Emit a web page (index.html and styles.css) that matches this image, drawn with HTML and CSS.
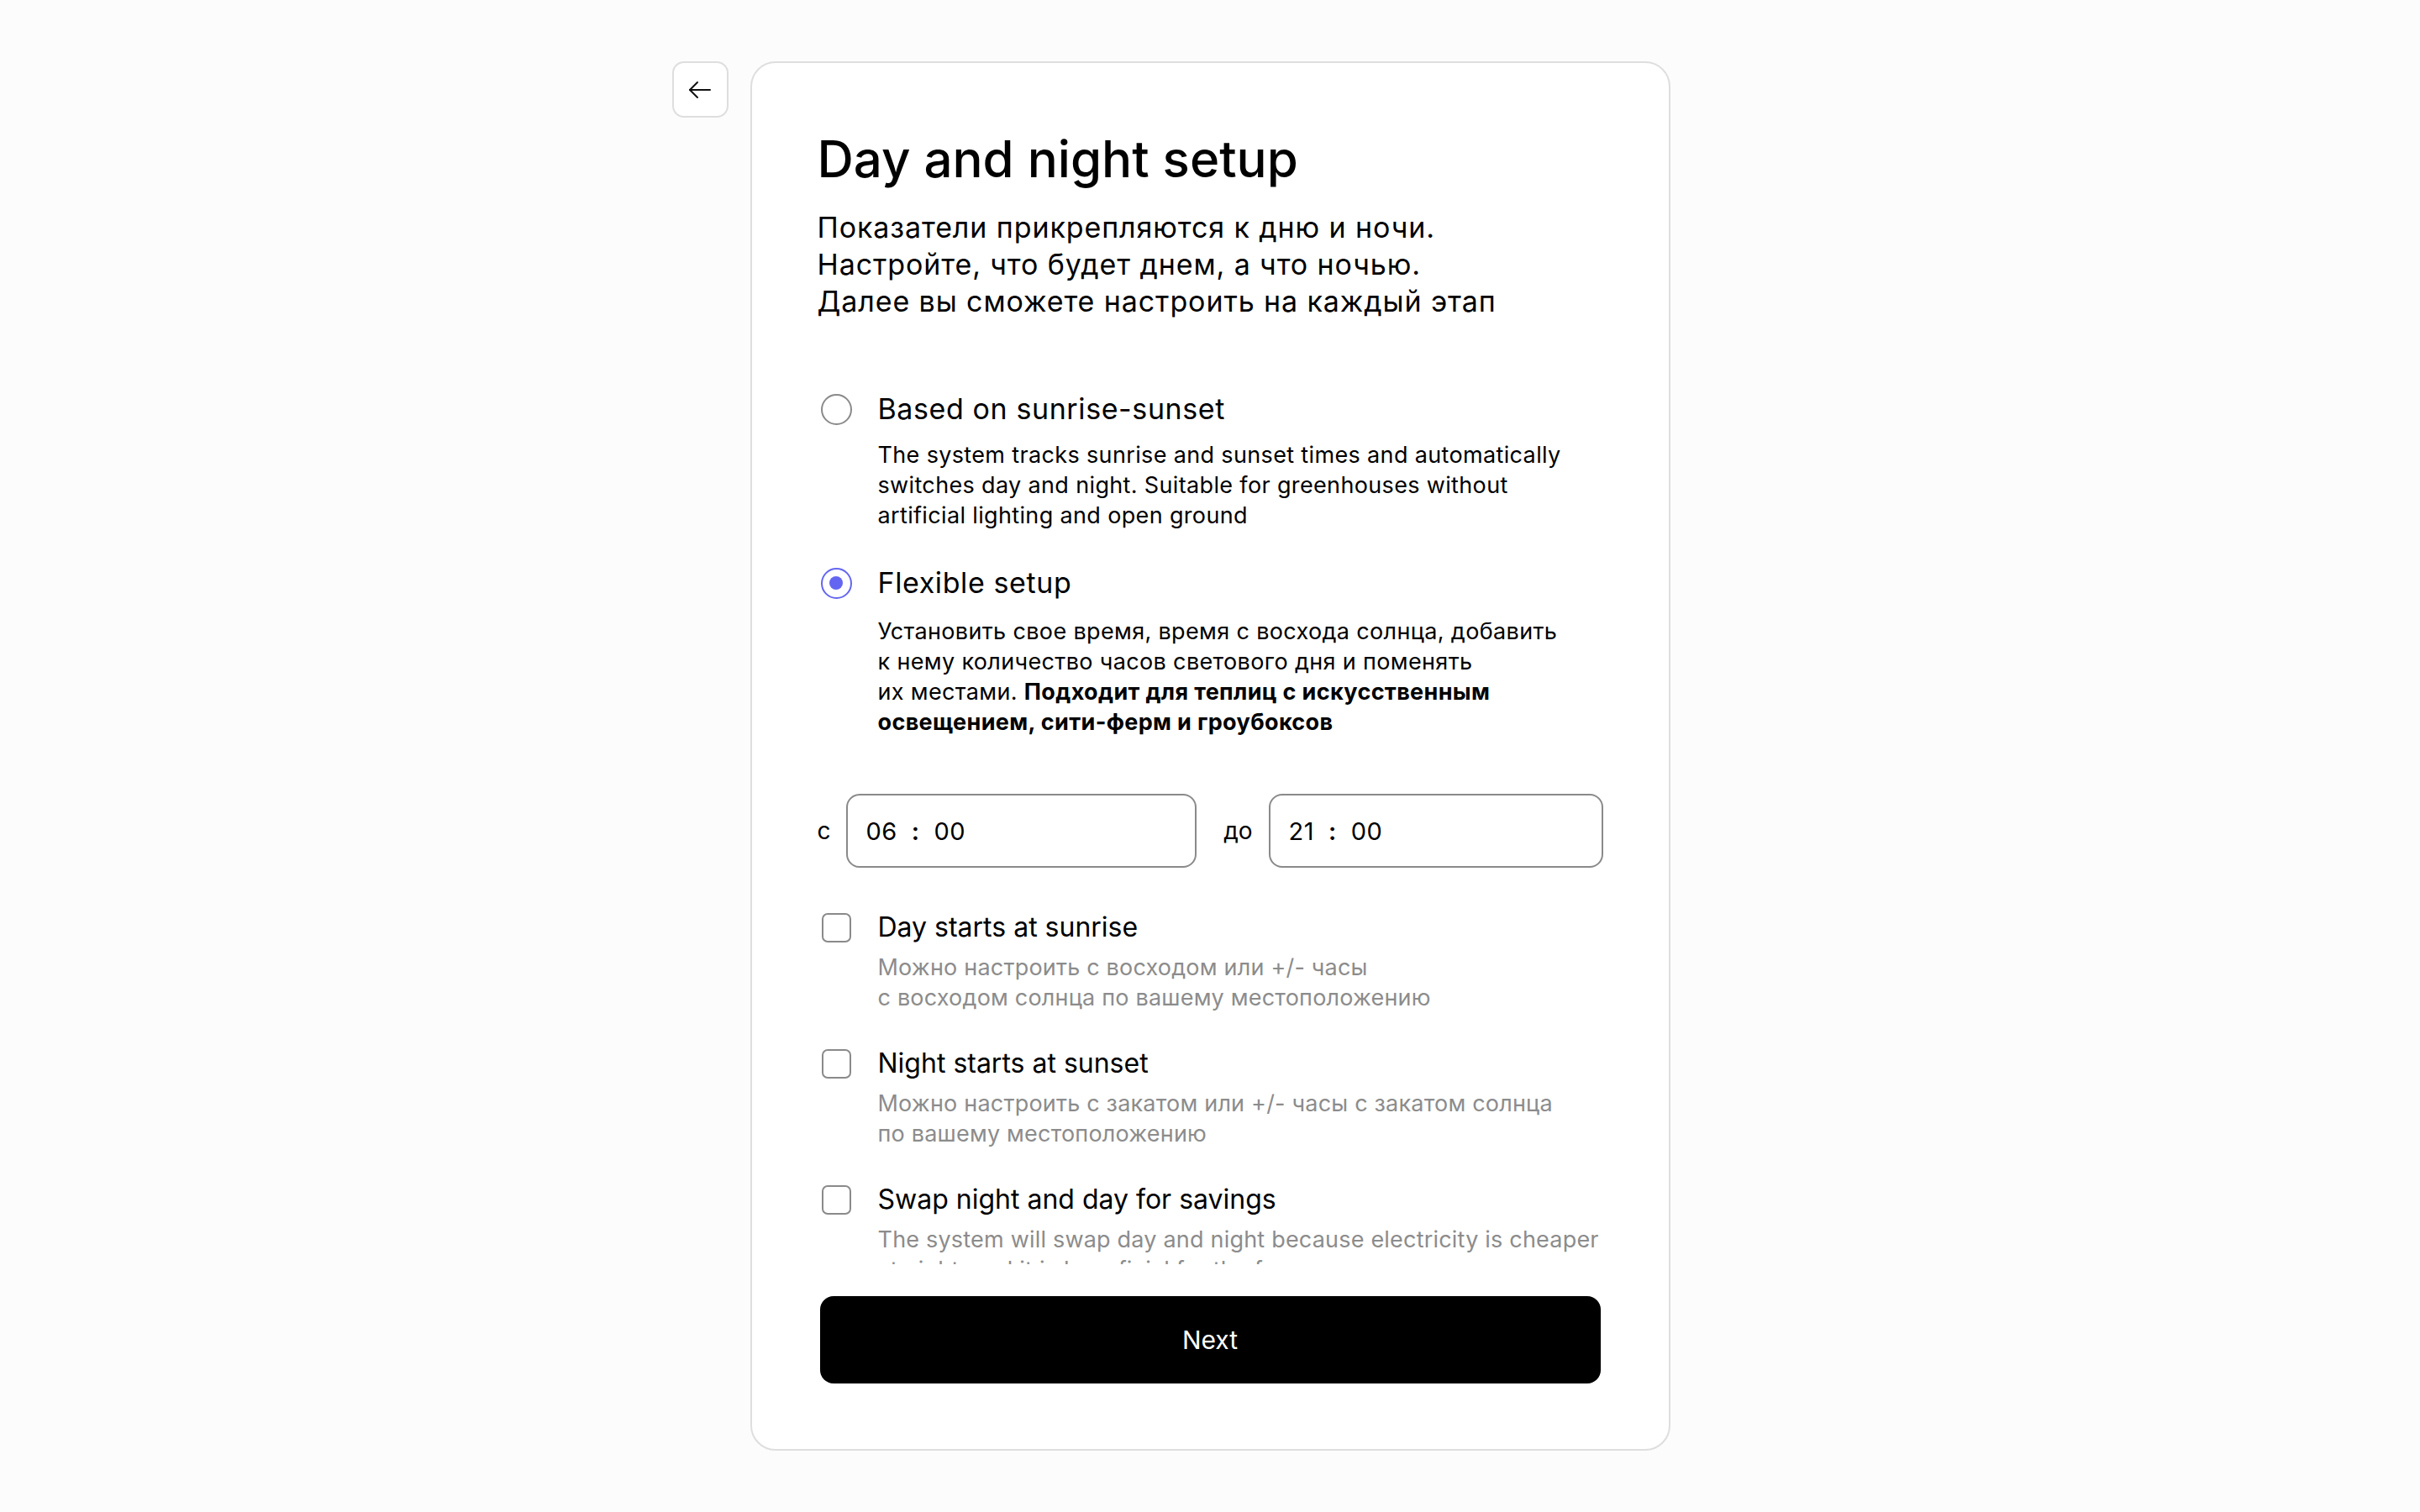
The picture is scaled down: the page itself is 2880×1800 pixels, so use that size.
FILE: index.html
```html
<!DOCTYPE html>
<html lang="ru">
<head>
<meta charset="utf-8">
<title>Day and night setup</title>
<link rel="stylesheet" href="styles.css">
</head>
<body>
<div class="page">
  <div class="side">
    <button class="back" type="button" aria-label="Back">
      <svg width="28" height="22" viewBox="0 0 28 22" fill="none" stroke="#111" stroke-width="2" stroke-linecap="round" stroke-linejoin="round">
        <path d="M26 11 H2"/>
        <path d="M11 2 L2 11 L11 20"/>
      </svg>
    </button>
  </div>
  <main class="card">
    <header class="head">
      <h1 class="title">Day and night setup</h1>
      <p class="subtitle">Показатели прикрепляются к дню и ночи.<br>Настройте, что будет днем, а что ночью.<br>Далее вы сможете настроить на каждый этап</p>
    </header>
    <div class="scroll">
      <div class="option option-first">
        <div class="opt-row">
          <span class="radio"></span>
          <span class="opt-title">Based on sunrise-sunset</span>
        </div>
        <p class="opt-desc">The system tracks sunrise and sunset times and automatically<br>switches day and night. Suitable for greenhouses without<br>artificial lighting and open ground</p>
      </div>
      <div class="option option-second">
        <div class="opt-row">
          <span class="radio radio-on"></span>
          <span class="opt-title">Flexible setup</span>
        </div>
        <p class="opt-desc opt-desc-2">Установить свое время, время с восхода солнца, добавить<br>к нему количество часов светового дня и поменять<br>их местами. <b>Подходит для теплиц с искусственным<br>освещением, сити-ферм и гроубоксов</b></p>
      </div>
      <div class="times">
        <span class="t-label">с</span>
        <div class="t-field t-field-1"><span>06</span><span class="colon">:</span><span>00</span></div>
        <span class="t-label t-label-2">до</span>
        <div class="t-field t-field-2"><span>21</span><span class="colon">:</span><span>00</span></div>
      </div>
      <div class="check check-first">
        <div class="chk-row">
          <span class="box"></span>
          <span class="chk-title">Day starts at sunrise</span>
        </div>
        <p class="chk-desc">Можно настроить с восходом или +/- часы<br>с восходом солнца по вашему местоположению</p>
      </div>
      <div class="check">
        <div class="chk-row">
          <span class="box"></span>
          <span class="chk-title">Night starts at sunset</span>
        </div>
        <p class="chk-desc">Можно настроить с закатом или +/- часы с закатом солнца<br>по вашему местоположению</p>
      </div>
      <div class="check">
        <div class="chk-row">
          <span class="box"></span>
          <span class="chk-title">Swap night and day for savings</span>
        </div>
        <p class="chk-desc">The system will swap day and night because electricity is cheaper<br>at night, and it is beneficial for the farm economy</p>
      </div>
    </div>
    <button class="next" type="button">Next</button>
  </main>
  <div class="side"></div>
</div>
</body>
</html>
```
FILE: styles.css
```css
* { box-sizing: border-box; }
html, body { margin: 0; padding: 0; }
body {
  background: #fcfcfc;
  font-family: Inter, "Noto Sans", "Liberation Sans", sans-serif;
  color: #000;
}
.page {
  display: grid;
  grid-template-columns: 1fr auto 1fr;
  padding-top: 73px;
}
.side { display: flex; justify-content: flex-end; align-items: flex-start; }
.back {
  width: 67px;
  height: 67px;
  margin-right: 26px;
  border: 2px solid #dedede;
  border-radius: 14px;
  background: #fff;
  display: flex;
  align-items: center;
  justify-content: center;
  padding: 0;
}
.card {
  width: 1095px;
  height: 1654px;
  background: #fff;
  border: 2px solid #dedede;
  border-radius: 30px;
  padding: 78px;
  display: flex;
  flex-direction: column;
}
.title {
  margin: 0;
  font-size: 60px;
  line-height: 72px;
  font-weight: 500;
  letter-spacing: 0;
}
.subtitle {
  margin: 24px 0 0;
  font-size: 34px;
  line-height: 44px;
  font-weight: 400;
  letter-spacing: 0.9px;
}
.scroll {
  flex: 1;
  min-height: 0;
  overflow: hidden;
}
.option-first { margin-top: 84px; }
.option-second { margin-top: 40px; }
.opt-row, .chk-row {
  display: flex;
  align-items: center;
}
.radio {
  width: 37px;
  height: 37px;
  margin-left: 4px;
  margin-right: 31px;
  border: 2px solid #8a8a8a;
  border-radius: 50%;
  flex: none;
  display: flex;
  align-items: center;
  justify-content: center;
}
.radio-on { border-color: #6466f1; }
.radio-on::after {
  content: "";
  width: 16px;
  height: 16px;
  border-radius: 50%;
  background: #6466f1;
}
.opt-title {
  font-size: 34px;
  line-height: 44px;
  letter-spacing: 0.6px;
}
.opt-desc {
  margin: 15px 0 0 72px;
  font-size: 27px;
  line-height: 36px;
  letter-spacing: 0.35px;
  white-space: nowrap;
}
.opt-desc-2 { margin-top: 18px; }
.opt-desc b { font-weight: 700; }
.times {
  margin-top: 67px;
  display: flex;
  align-items: center;
}
.t-label {
  font-size: 28px;
  line-height: 36px;
  margin-right: 18px;
}
.t-label-2 { margin-left: 32px; margin-right: 19px; }
.t-field {
  height: 88px;
  border: 2px solid #8a8a8a;
  border-radius: 16px;
  display: flex;
  align-items: center;
  padding-left: 22px;
  font-size: 29px;
  letter-spacing: 0.5px;
  gap: 17px;
}
.t-field-1 { flex: 1; }
.t-field-2 { width: 398px; }
.colon { font-weight: 600; }
.check { margin-top: 40px; }
.check-first { margin-top: 51px; }
.box {
  width: 35px;
  height: 35px;
  margin-left: 5px;
  margin-right: 32px;
  border: 2px solid #8a8a8a;
  border-radius: 7px;
  flex: none;
}
.chk-title {
  font-size: 32px;
  line-height: 40px;
}
.chk-desc {
  margin: 10px 0 0 72px;
  font-size: 27px;
  line-height: 36px;
  letter-spacing: 0.2px;
  color: #8c8c8c;
  white-space: nowrap;
}
.next {
  margin: 38px 3px 0;
  height: 104px;
  flex: none;
  background: #000;
  color: #fff;
  border: 0;
  border-radius: 16px;
  font-family: inherit;
  font-size: 30px;
  font-weight: 400;
}
```
